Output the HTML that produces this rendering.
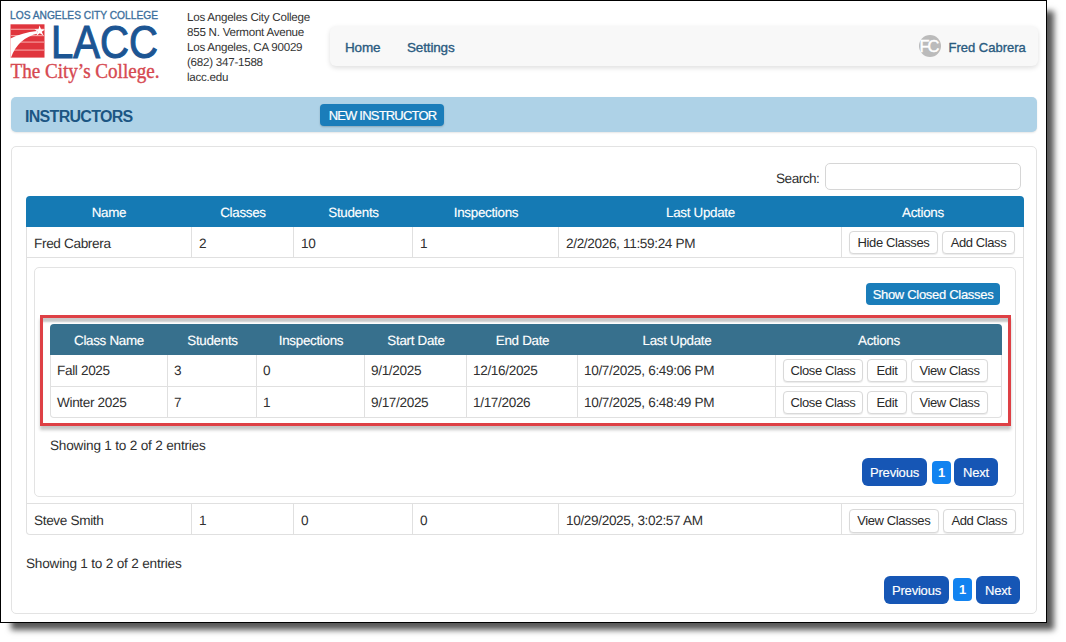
<!DOCTYPE html>
<html><head><meta charset="utf-8">
<style>
*{box-sizing:border-box;margin:0;padding:0}
html,body{width:1066px;height:642px;overflow:hidden;background:#fff;font-family:"Liberation Sans",sans-serif;color:#303030}
.abs{position:absolute}
#frame{position:absolute;left:0;top:0;width:1047px;height:623px;border:1px solid #000;background:#fff;box-shadow:9px 9px 6px -2px rgba(0,0,0,0.66)}
.addr{left:187px;top:9.5px;font-size:11.6px;line-height:15px;color:#333;letter-spacing:-0.25px;text-rendering:geometricPrecision}
.nav{left:330px;top:26px;width:708px;height:40px;background:#f8f8f8;border-radius:6px;box-shadow:0 2px 5px rgba(0,0,0,0.13)}
.navlink{font-size:13.5px;color:#2a5b80;top:39.5px;letter-spacing:-0.15px;-webkit-text-stroke:0.35px #2a5b80}
.bar{left:11px;top:97px;width:1026px;height:35px;background:#aed2e7;border-radius:5px;box-shadow:0 1px 2px rgba(0,0,0,0.1)}
.bartitle{left:25px;top:108px;font-size:16px;letter-spacing:-0.7px;font-weight:bold;color:#1c5683}
.btnnew{left:320px;top:104px;width:124px;height:22px;background:#1a7dba;padding-left:1px;border-radius:4px;color:#fff;font-size:13px;text-align:center;line-height:23px;letter-spacing:-0.8px;box-shadow:0 1px 2px rgba(0,0,0,0.2);-webkit-text-stroke:0.2px #fff}
.card{left:11px;top:146px;width:1026px;height:468px;border:1px solid #e3e3e3;border-radius:5px}
.search-l{left:776px;top:171px;font-size:13.6px;color:#303030;letter-spacing:-0.5px;text-rendering:geometricPrecision}
.search-i{left:825px;top:162.5px;width:196px;height:27px;border:1px solid #d6d6d6;border-radius:5px}
table{border-collapse:separate;border-spacing:0;table-layout:fixed;font-size:13.6px;letter-spacing:-0.35px;text-rendering:geometricPrecision}
td,th{white-space:nowrap;overflow:hidden}
.t1{left:26px;top:196px;width:998px}
.t1 th{background:#157ab4;color:#fff;font-weight:normal;height:31px;text-align:center;letter-spacing:-0.3px;padding-top:1.5px;-webkit-text-stroke:0.15px #fff;font-size:13.4px}
.t1 td{height:31px;border-right:1px solid #e0e0e0;border-bottom:1px solid #e0e0e0;padding-left:7px;padding-top:2px}
.btn{position:absolute;height:23px;border:1px solid #d9d9d9;border-radius:4px;background:#fff;font-size:13px;color:#2a2a2a;text-align:center;line-height:22px;letter-spacing:-0.4px;box-shadow:0 1px 1px rgba(0,0,0,0.08)}
.ncard{left:34px;top:266.5px;width:982px;height:230.5px;border:1px solid #e3e3e3;border-radius:5px}
.btnshow{left:866px;top:283px;width:134px;height:22px;background:#1a7dba;border-radius:4px;color:#fff;font-size:13px;text-align:center;line-height:23px;letter-spacing:-0.3px;-webkit-text-stroke:0.2px #fff}
.t2{left:50px;top:324px;width:952px}
.t2 th{background:#37708d;color:#fff;font-weight:normal;height:31px;text-align:center;letter-spacing:-0.3px;padding-top:1.5px;-webkit-text-stroke:0.15px #fff;font-size:13.4px}
.t2 td{height:31.6px;border-right:1px solid #e0e0e0;border-bottom:1px solid #e0e0e0;padding-left:6px;padding-top:1px}
.pg{position:absolute;height:28px;background:#1656b5;color:#fff;border-radius:6px;font-size:13px;text-align:center;line-height:30px;letter-spacing:-0.2px;-webkit-text-stroke:0.15px #fff}
.pg1{position:absolute;height:23px;width:19px;background:#1283f0;color:#fff;border-radius:4px;font-size:13px;text-align:center;line-height:24px;font-weight:bold}
.red{left:40px;top:315px;width:971px;height:111px;border:3px solid #de4045;box-shadow:0 4px 3px rgba(0,0,0,0.22),inset 0 5px 2px -1px rgba(0,0,0,0.21)}
td:first-child{border-left:1px solid #e0e0e0}
.t1 tr:last-child td:first-child,.t2 tr:last-child td:first-child{border-bottom-left-radius:4px}
.t1 tr:last-child td:last-child,.t2 tr:last-child td:last-child{border-bottom-right-radius:4px}
.info{font-size:13.6px;color:#303030;letter-spacing:-0.2px;text-rendering:geometricPrecision}
</style></head><body>
<div id="frame"></div>

<!-- logo -->
<svg class="abs" style="left:0;top:0" width="170" height="90" viewBox="0 0 170 90">
  <text x="10" y="18.8" font-family="Liberation Sans" font-size="10.2" fill="#3b6e9c" stroke="#3b6e9c" stroke-width="0.3" textLength="148" lengthAdjust="spacingAndGlyphs">LOS ANGELES CITY COLLEGE</text>
  <rect x="10.5" y="24.3" width="34" height="33.3" fill="#e0353d"/>
  <g fill="#f59a9a">
    <rect x="10.5" y="28.7" width="34" height="1.2"/>
    <rect x="10.5" y="35" width="34" height="1.2"/>
    <rect x="10.5" y="41.5" width="34" height="1.2"/>
    <rect x="10.5" y="49.5" width="34" height="1.2"/>
  </g>
  <path d="M10.5,38.6 Q22,32.5 37,31 L38,33.5 Q18,38 11,57.6 L10.5,57.6 Z" fill="#fff"/>
  <path d="M39.5,25.5 L41,29.3 L45,29.5 L41.8,31.8 L43.5,35.5 L39.8,33.2 L36.5,35.8 L37.6,31.7 L34.5,29.3 L38.5,29.2 Z" fill="#fff"/>
  <text x="51" y="57.6" font-family="Liberation Sans" font-size="47" fill="#1c5593" stroke="#1c5593" stroke-width="1.1" textLength="107" lengthAdjust="spacingAndGlyphs">LACC</text>
  <text x="10.5" y="77.6" font-family="Liberation Serif" font-size="21.3" fill="#d64951" stroke="#d64951" stroke-width="0.4" textLength="149" lengthAdjust="spacingAndGlyphs">The City’s College.</text>
</svg>

<div class="abs addr">Los Angeles City College<br>855 N. Vermont Avenue<br>Los Angeles, CA 90029<br>(682) 347-1588<br>lacc.edu</div>

<div class="abs nav"></div>
<div class="abs navlink" style="left:345px">Home</div>
<div class="abs navlink" style="left:407px">Settings</div>
<div class="abs" style="left:918.5px;top:35px;width:22px;height:22px;border-radius:50%;background:#bbbbbb"></div><div class="abs" style="left:919.5px;top:36px;font-size:16.5px;line-height:20px;color:#fff;letter-spacing:-2.2px;-webkit-text-stroke:0.4px #fff">FC</div>
<div class="abs navlink" style="left:948.5px;font-size:13px;top:40px;letter-spacing:0px">Fred Cabrera</div>

<div class="abs bar"></div>
<div class="abs bartitle">INSTRUCTORS</div>
<div class="abs btnnew">NEW INSTRUCTOR</div>

<div class="abs card"></div>
<div class="abs search-l">Search:</div>
<div class="abs search-i"></div>

<table class="abs t1">
<colgroup><col style="width:166px"><col style="width:102px"><col style="width:119px"><col style="width:146px"><col style="width:283px"><col style="width:182px"></colgroup>
<tr><th style="border-top-left-radius:4px">Name</th><th>Classes</th><th>Students</th><th>Inspections</th><th>Last Update</th><th style="border-top-right-radius:4px;padding-right:20px">Actions</th></tr>
<tr><td>Fred Cabrera</td><td>2</td><td>10</td><td>1</td><td>2/2/2026, 11:59:24 PM</td><td></td></tr>
<tr><td colspan="6" style="height:246px"></td></tr>
<tr><td>Steve Smith</td><td>1</td><td>0</td><td>0</td><td>10/29/2025, 3:02:57 AM</td><td></td></tr>
</table>
<div class="btn" style="left:849px;top:231px;width:89px">Hide Classes</div>
<div class="btn" style="left:942px;top:231px;width:73px">Add Class</div>

<div class="abs ncard"></div>
<div class="abs btnshow">Show Closed Classes</div>

<div class="abs red"></div>
<table class="abs t2">
<colgroup><col style="width:118px"><col style="width:89px"><col style="width:108px"><col style="width:102px"><col style="width:111px"><col style="width:198px"><col style="width:226px"></colgroup>
<tr><th style="border-top-left-radius:4px">Class Name</th><th>Students</th><th>Inspections</th><th>Start Date</th><th>End Date</th><th>Last Update</th><th style="border-top-right-radius:4px;padding-right:20px">Actions</th></tr>
<tr><td>Fall 2025</td><td>3</td><td>0</td><td>9/1/2025</td><td>12/16/2025</td><td>10/7/2025, 6:49:06 PM</td><td></td></tr>
<tr><td>Winter 2025</td><td>7</td><td>1</td><td>9/17/2025</td><td>1/17/2026</td><td>10/7/2025, 6:48:49 PM</td><td></td></tr>
</table>
<div class="btn" style="left:783px;top:359px;width:80px">Close Class</div>
<div class="btn" style="left:867px;top:359px;width:40px">Edit</div>
<div class="btn" style="left:911px;top:359px;width:77px">View Class</div>
<div class="btn" style="left:783px;top:391px;width:80px">Close Class</div>
<div class="btn" style="left:867px;top:391px;width:40px">Edit</div>
<div class="btn" style="left:911px;top:391px;width:77px">View Class</div>

<div class="abs info" style="left:50px;top:438px">Showing 1 to 2 of 2 entries</div>
<div class="pg" style="left:862px;top:458px;width:65px">Previous</div>
<div class="pg1" style="left:932px;top:461px">1</div>
<div class="pg" style="left:954px;top:458px;width:44px">Next</div>

<div class="btn" style="left:849px;top:508.5px;height:24px;width:89.5px">View Classes</div>
<div class="btn" style="left:943px;top:508.5px;height:24px;width:72.5px">Add Class</div>

<div class="abs info" style="left:26px;top:556px">Showing 1 to 2 of 2 entries</div>
<div class="pg" style="left:884px;top:576px;width:65px">Previous</div>
<div class="pg1" style="left:953px;top:578px">1</div>
<div class="pg" style="left:976px;top:576px;width:44px">Next</div>
</body></html>
